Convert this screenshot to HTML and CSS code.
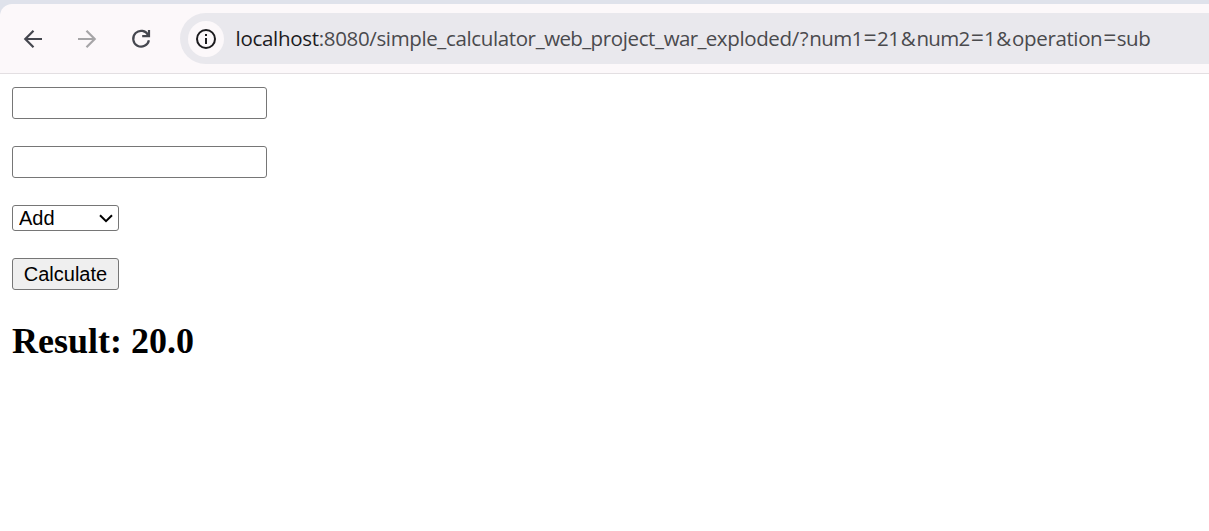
FILE: index.html
```
<!DOCTYPE html>
<html lang="en">
<head>
<meta charset="utf-8">
<title>Calculator</title>
<link rel="stylesheet" href="styles.css">
</head>
<body>
<header class="chrome">
  <div class="toolbar">
    <nav class="nav">
      <svg class="icon" viewBox="0 0 24 24"><path d="M21 12H4.500M12.500 3.800L4.300 12l8.200 8.200"/></svg>
      <svg class="icon icon-disabled" viewBox="0 0 24 24"><path d="M3 12h16.500M11.500 3.800L19.700 12l-8.200 8.200"/></svg>
      <svg class="icon" viewBox="0 0 24 24"><path d="M19.200 8.200A7.900 7.900 0 1 0 19.900 13.200"/><path d="M20 3v6.200h-6.800"/></svg>
    </nav>
    <div class="address">
      <span class="site-info">
        <svg class="info-icon" viewBox="0 0 20 20"><circle cx="10" cy="10" r="9"/><path d="M10 9v6M10 5v2"/></svg>
      </span>
      <span class="url"><span class="host">localhost</span>:8080/simple_calculator_<span class="tight">web_</span>project_<span class="tight">war_</span>exploded<span class="sep">/?</span><span class="tight">num1</span><span class="eq">=</span>21<span class="amp">&amp;</span><span class="tight">num2</span><span class="eq">=</span>1<span class="amp">&amp;</span>operation<span class="eq">=</span>sub</span>
    </div>
  </div>
</header>
<main class="page">
  <form class="form">
    <input class="field" type="text" name="num1">
    <input class="field" type="text" name="num2">
    <div class="select-wrap">
      <select class="select" name="operation"><option>Add</option></select>
      <svg class="chevron" viewBox="0 0 14 10"><path d="M1 1.200L7 7.100L13 1.200"/></svg>
    </div>
    <button class="button" type="button">Calculate</button>
  </form>
  <h2 class="result">Result: 20.0</h2>
</main>
</body>
</html>
```
FILE: styles.css
```
* { box-sizing: border-box; }
body { margin: 0; background: #fff; color: #000; overflow: hidden; }
.chrome { height: 74px; padding-top: 4px; background: #dfe2eb; }
.toolbar {
  display: flex;
  align-items: flex-start;
  height: 70px;
  padding: 9px 0 0 21px;
  background: #fcf8fa;
  border-bottom: 1px solid #e3dfe2;
  border-top-left-radius: 12px;
}
.nav { display: flex; align-items: center; gap: 30px; width: 159px; height: 51px; flex: none; }
.icon { width: 24px; height: 24px; fill: none; stroke: #45474f; stroke-width: 2.2; }
.icon-disabled { stroke: #a6a5a7; }
.address {
  display: flex;
  align-items: center;
  flex: 1;
  height: 51px;
  padding-left: 8px;
  background: #e9e8ed;
  border-radius: 26px 0 0 26px;
}
.site-info {
  display: flex;
  align-items: center;
  justify-content: center;
  width: 36px;
  height: 36px;
  margin-right: 11.5px;
  border-radius: 50%;
  background: #fcf8fa;
}
.info-icon { width: 20px; height: 20px; fill: none; stroke: #1c1b1e; stroke-width: 2; }
.url { padding-bottom: 1px; font: 20.5px/28px "Open Sans", "Noto Sans", sans-serif; white-space: nowrap; color: #4a4a4d; letter-spacing: -0.37px; }
.host { color: #1c1b1e; letter-spacing: -0.28px; }
.tight { letter-spacing: -0.65px; }
.sep { letter-spacing: 0.65px; }
.eq { margin-left: 1px; font-size: 23px; line-height: 1; letter-spacing: 0.2px; }
.amp { margin-left: 1px; letter-spacing: 0.8px; }
.page { padding: 13px 12px 0; }
.form { display: flex; flex-direction: column; align-items: flex-start; gap: 27px; }
.field { width: 255px; height: 32px; border: 1px solid #767676; border-radius: 3px; background: #fff; }
.select-wrap { position: relative; width: 107px; height: 26px; }
.select {
  display: block;
  width: 100%;
  height: 100%;
  padding: 0 0 0 6px;
  appearance: none;
  border: 1px solid #767676;
  border-radius: 3px;
  background: #fff;
  color: #000;
  font: 20px/24px "Liberation Sans", Arial, sans-serif;
}
.chevron { position: absolute; right: 6px; top: 9px; width: 14px; height: 10px; fill: none; stroke: #000; stroke-width: 2; }
.button {
  width: 107px;
  height: 32px;
  padding: 0;
  border: 1px solid #767676;
  border-radius: 3px;
  background: #efefef;
  color: #000;
  font: 20px/28px "Liberation Sans", Arial, sans-serif;
}
.result { margin: 31px 0 0; font: bold 36px/41px "Liberation Serif", "Times New Roman", serif; }
```
